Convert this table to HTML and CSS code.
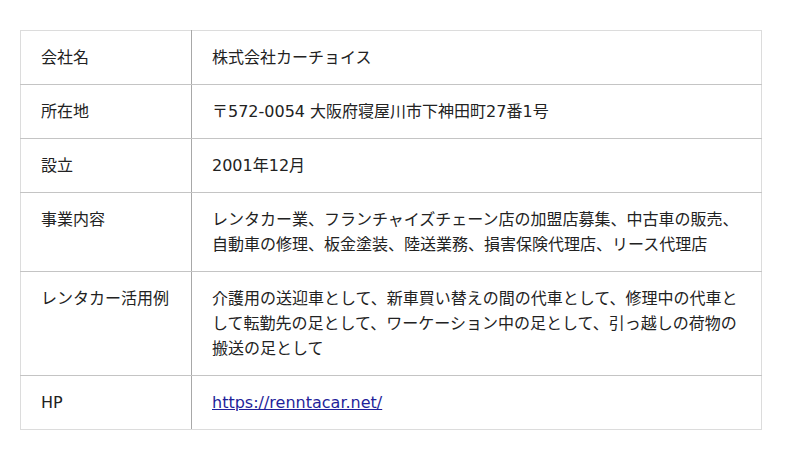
FILE: index.html
```html
<!DOCTYPE html>
<html lang="ja">
<head>
<meta charset="utf-8">
<link rel="stylesheet" href="styles.css">
</head>
<body>
<div class="wrap">
<table class="info">
<tr><th>会社名</th><td>株式会社カーチョイス</td></tr>
<tr><th>所在地</th><td>〒572-0054 大阪府寝屋川市下神田町27番1号</td></tr>
<tr><th>設立</th><td>2001年12月</td></tr>
<tr><th>事業内容</th><td>レンタカー業、フランチャイズチェーン店の加盟店募集、中古車の販売、自動車の修理、板金塗装、陸送業務、損害保険代理店、リース代理店</td></tr>
<tr><th>レンタカー活用例</th><td>介護用の送迎車として、新車買い替えの間の代車として、修理中の代車として転勤先の足として、ワーケーション中の足として、引っ越しの荷物の搬送の足として</td></tr>
<tr><th>HP</th><td><a href="#">https://renntacar.net/</a></td></tr>
</table>
</div>
</body>
</html>
```

FILE: styles.css
```css
html, body {
  margin: 0;
  padding: 0;
  background: #fff;
}
.wrap {
  padding: 30px 0 0 20px;
}
.info {
  width: 742px;
  border-collapse: collapse;
  border: 1px solid #dcdcdc;
  font-family: "DejaVu Sans", "Noto Sans CJK JP", sans-serif;
  font-size: 16px;
  color: #222;
  line-height: 25px;
}
.info th, .info td {
  border-top: 1px solid #c4c4c4;
  border-bottom: 1px solid #c4c4c4;
  padding: 14px 20px;
  text-align: left;
  vertical-align: top;
  font-weight: normal;
}
.info tr:first-child th, .info tr:first-child td {
  border-top-color: #dcdcdc;
}
.info tr:last-child th, .info tr:last-child td {
  border-bottom-color: #dcdcdc;
}
.info th {
  width: 130px;
  border-right: 1px solid #a8a8a8;
}
.info a {
  color: #1f1f9a;
}
```
